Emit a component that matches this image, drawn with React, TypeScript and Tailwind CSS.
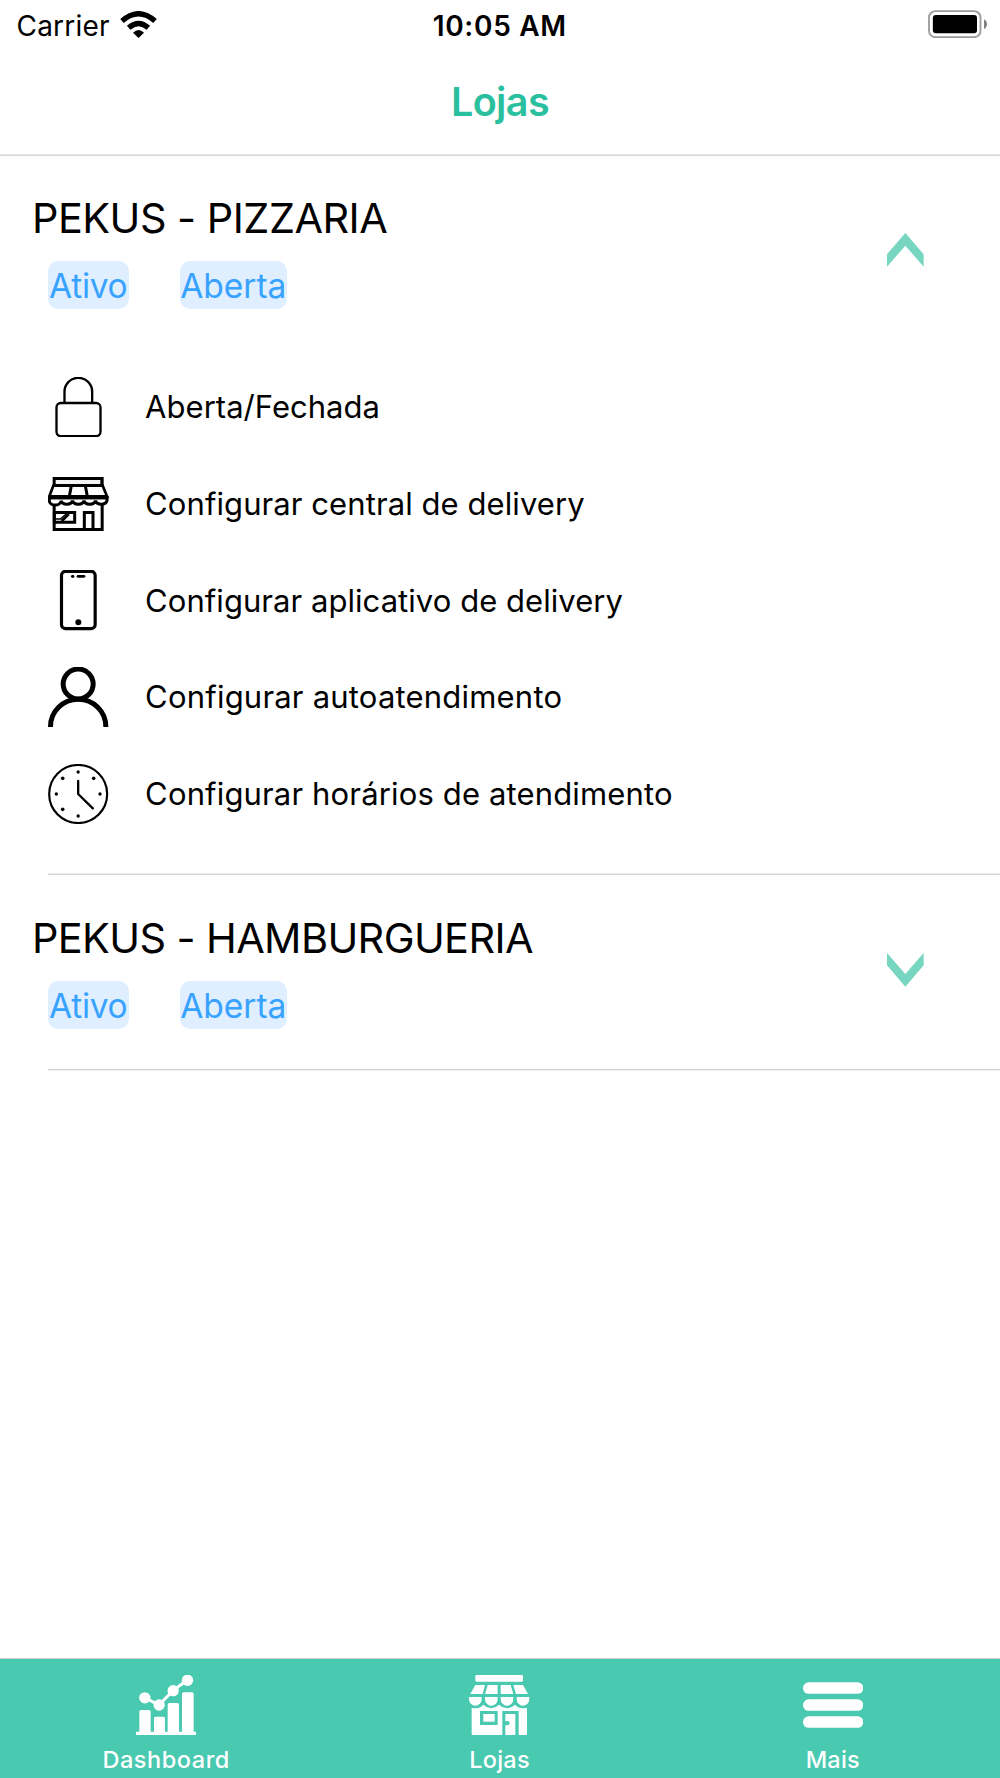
import React from "react";

const iconClass = "block h-[60.33px] w-[60.33px] shrink-0";

function LockIcon() {
  return (
    <svg viewBox="55 51 181 181" className={iconClass} fill="none" stroke="#000" strokeWidth="7">
      <rect x="80.5" y="129" width="132" height="99.5" rx="13" />
      <path d="M104.5 129V95a41.5 41.5 0 0 1 83 0v34" />
    </svg>
  );
}

function StoreIcon() {
  return (
    <svg viewBox="55 341 181 181" className={iconClass} fill="none" stroke="#000">
      <path d="M69 350h153v27H69z" fill="#000" stroke="none" />
      <path d="M78 359h134v12H78z" fill="#f3f3f5" stroke="none" />
      <path d="M73.5 426v81.500h144V426" strokeWidth="9" />
      <path d="M71 376h148l13 32H59z" strokeWidth="8" fill="#fff" />
      <path d="M125 376l-6 32M167 376l6 32" strokeWidth="9" />
      <path
        d="M59 412v9a17.500 13 0 0 0 35 0 17.500 13 0 0 0 34.500 0 17.500 13 0 0 0 34.500 0 17.500 13 0 0 0 34.500 0 17.500 13 0 0 0 34.500 0v-9z"
        fill="#fff"
        strokeWidth="9"
      />
      <path d="M55 411.500h181" strokeWidth="11" />
      <path d="M74 456.500h61v29H74zM164 508v-51.500h26V508" strokeWidth="9" />
      <path d="M78 476h14l20-17" strokeWidth="4" />
      <path d="M96 482l21-21" strokeWidth="9" />
    </svg>
  );
}

function PhoneIcon() {
  return (
    <svg viewBox="55 61 181 181" className={iconClass} fill="none" stroke="#000">
      <rect x="95.500" y="65" width="101" height="172" rx="12" strokeWidth="9.500" />
      <path d="M145 80h18" strokeWidth="8" strokeLinecap="round" />
      <circle cx="129" cy="80" r="5" fill="#000" stroke="none" />
      <circle cx="146" cy="217.500" r="9" fill="#000" stroke="none" />
    </svg>
  );
}

function PersonIcon() {
  return (
    <svg viewBox="55 351 181 181" className={iconClass} fill="none" stroke="#000" strokeWidth="15">
      <circle cx="145.500" cy="402" r="45" />
      <path d="M62.500 532v-2a83 82 0 0 1 166 0v2" />
    </svg>
  );
}

function ClockIcon() {
  return (
    <svg viewBox="55 641 181 181" className={iconClass} fill="none" stroke="#000">
      <circle cx="145.500" cy="731" r="87" strokeWidth="6.500" />
      <path d="M145.500 692v39l44 43" strokeWidth="7" strokeLinecap="round" strokeLinejoin="round" />
      <g fill="#000" stroke="none">
        <circle cx="145.500" cy="665" r="5" />
        <circle cx="145.500" cy="797" r="5" />
        <circle cx="80" cy="731" r="5" />
        <circle cx="211" cy="731" r="5" />
        <circle cx="99" cy="684" r="5.500" />
        <circle cx="192" cy="684" r="5.500" />
        <circle cx="99" cy="777" r="5.500" />
      </g>
    </svg>
  );
}

function DashboardTabIcon() {
  return (
    <svg viewBox="168 75 181 181" className={iconClass} fill="#fff">
      <path d="M168 245h10v-60q0-5 5-5h24q5 0 5 5v60h10v-40q0-5 5-5h23q5 0 5 5v40h8v-81q0-5 5-5h24q5 0 5 5v81h9V132q0-5 5-5h25q5 0 5 5v113h9v11H168z" />
      <path d="M194 143l43 22 42-43 43-32" fill="none" stroke="#fff" strokeWidth="9" />
      <circle cx="194.500" cy="143.500" r="17" />
      <circle cx="237.500" cy="165" r="17" />
      <circle cx="279.500" cy="122" r="17" />
      <circle cx="322.500" cy="91" r="17" />
    </svg>
  );
}

function StoreTabIcon() {
  return (
    <svg viewBox="88 75 181 181" className={iconClass} fill="#fff">
      <rect x="107" y="75" width="143" height="20" rx="4" />
      <path d="M107 105h29l-7 27H92zM144 105h30v27h-38zM183 105h30l8 27h-38zM221 105h29l15 27h-36z" />
      <path d="M88 141h38v6a19 20 0 0 1-38 0zM136 141h38v6a19 20 0 0 1-38 0zM183 141h38v6a19 20 0 0 1-38 0zM231 141h38v6a19 20 0 0 1-38 0z" />
      <path
        fillRule="evenodd"
        d="M96 173q22 6 35-9 24 22 47 0 24 22 48 0 14 15 36 9v78q0 5-5 5h-20v-73h-49v73H101q-5 0-5-5zM121 183v42h53v-42z"
      />
      <path d="M131 192h34v23h-34z" />
      <path d="M197 192h30v63h-30v-30q13 2 13-6t-13-5z" />
    </svg>
  );
}

function MenuTabIcon() {
  return (
    <svg viewBox="68 75 181 181" className={iconClass} fill="#fff">
      <rect x="68" y="97" width="181" height="34.500" rx="17" />
      <rect x="68" y="148" width="181" height="34.500" rx="17" />
      <rect x="68" y="199" width="181" height="34.500" rx="17" />
    </svg>
  );
}

function WifiIcon() {
  return (
    <svg viewBox="360 30 111 81" className="block h-[27px] w-[37px]" fill="none" stroke="#000">
      <path d="M366 60q50-43.500 99 0" strokeWidth="16" />
      <path d="M386 80.500q30-26 59 0" strokeWidth="16" />
      <path d="M399 95q17-16 33 0l-16.500 16z" fill="#000" stroke="none" />
    </svg>
  );
}

function BatteryIcon() {
  return (
    <svg viewBox="204 30 178 84" className="block h-[28px] w-[59.33px]">
      <rect x="207" y="33.500" width="154.500" height="78" rx="19" fill="none" stroke="#9b9b9b" strokeWidth="5.500" />
      <rect x="218.500" y="45" width="132.500" height="54.500" rx="9" fill="#000" />
      <path d="M372 58q9 5 9 14.500t-9 14.500z" fill="#808080" />
    </svg>
  );
}

function Chevron({ up }: { up: boolean }) {
  return (
    <svg viewBox="0 0 110 101" className="block h-[33.67px] w-[36.67px]" fill="#76d6c0">
      {up ? <path d="M55 0l55 64v37L55 38 0 101V64z" /> : <path d="M55 101l55-64V0L55 63 0 0v37z" />}
    </svg>
  );
}

function StoreHeader({ name, open, tracking }: { name: string; open: boolean; tracking: string }) {
  return (
    <div className="flex h-[194px] items-start justify-between pt-[36.500px] pr-[76.500px]">
      <div>
        <h2 className={`ml-[32px] h-[50px] text-[41.4px] leading-[50px] whitespace-nowrap ${tracking}`}>{name}</h2>
        <div className="mt-[18.500px] ml-[48px] flex gap-[51px] text-[33.500px] leading-[50px] text-[#37a2ff]">
          <span className="flex h-[48px] w-[80.500px] justify-center rounded-[10px] bg-[#e0efff] tracking-[-0.3px]">Ativo</span>
          <span className="flex h-[48px] w-[107.500px] justify-center rounded-[10px] bg-[#e0efff]">Aberta</span>
        </div>
      </div>
      <div className="mt-[40.800px]">
        <Chevron up={open} />
      </div>
    </div>
  );
}

const options = [
  { label: "Aberta/Fechada", Icon: LockIcon, tracking: "tracking-[0.03px]" },
  { label: "Configurar central de delivery", Icon: StoreIcon, tracking: "tracking-[0.08px]" },
  { label: "Configurar aplicativo de delivery", Icon: PhoneIcon, tracking: "tracking-[0.05px]" },
  { label: "Configurar autoatendimento", Icon: PersonIcon, tracking: "tracking-[0.2px]" },
  { label: "Configurar horários de atendimento", Icon: ClockIcon, tracking: "tracking-[0.15px]" },
];

const tabs = [
  { label: "Dashboard", Icon: DashboardTabIcon, tracking: "tracking-[0.55px]" },
  { label: "Lojas", Icon: StoreTabIcon, tracking: "tracking-[0.25px]" },
  { label: "Mais", Icon: MenuTabIcon, tracking: "tracking-[0.25px]" },
];

export default function App() {
  return (
    <div className="flex h-[1778px] w-[1000px] flex-col overflow-hidden bg-white font-['Inter',sans-serif] text-black">
      <div className="grid h-[51px] shrink-0 grid-cols-3 items-center pr-[13px] pl-[16.500px] text-[28px] leading-[50px]">
        <div className="flex items-center gap-[10.500px]">
          <span className="tracking-[0.2px]">Carrier</span>
          <div className="-mt-[3px]">
            <WifiIcon />
          </div>
        </div>
        <span className="pr-[4px] text-center font-semibold tracking-[0.7px] whitespace-nowrap">10:05 AM</span>
        <div className="-mt-[3px] flex justify-end">
          <BatteryIcon />
        </div>
      </div>
      <header className="flex h-[103px] shrink-0 items-center justify-center text-[39.500px] leading-[48px] font-semibold tracking-[-0.6px] text-[#2abf9e]">
        <h1 className="pb-[2px]">Lojas</h1>
      </header>
      <div className="h-[2px] shrink-0 border-t border-b border-t-[#e6e6e6] border-b-[#d9d9d9]" />

      <main className="min-h-0 flex-1">
        <section className="h-[717px]">
          <StoreHeader name="PEKUS - PIZZARIA" open tracking="tracking-[-0.5px]" />
          <ul className="pt-[9px] pl-[48.200px]">
            {options.map(({ label, Icon, tracking }) => (
              <li key={label} className="flex h-[96.670px] items-center gap-[36.600px]">
                <Icon />
                <span className={`text-[31px] leading-[40px] whitespace-nowrap ${tracking}`}>{label}</span>
              </li>
            ))}
          </ul>
        </section>
        <div className="ml-[48px] h-[2px] border-t border-b border-t-[#ececec] border-b-[#d4d4d4]" />
        <section className="pt-px">
          <StoreHeader name="PEKUS - HAMBURGUERIA" open={false} tracking="tracking-[-0.6px]" />
        </section>
        <div className="-mt-px ml-[48px] h-[2px] border-t border-b border-t-[#d0d0d0] border-b-[#f0f0f0]" />
      </main>

      <nav className="grid h-[120px] shrink-0 grid-cols-3 border-t border-[#c8cfcd] bg-[#49c9af] text-white">
        {tabs.map(({ label, Icon, tracking }) => (
          <div key={label} className="flex flex-col items-center pt-[16px] pr-[1px]">
            <Icon />
            <span className={`mt-[10px] text-[23.5px] leading-[30px] font-medium ${tracking}`}>{label}</span>
          </div>
        ))}
      </nav>
    </div>
  );
}
